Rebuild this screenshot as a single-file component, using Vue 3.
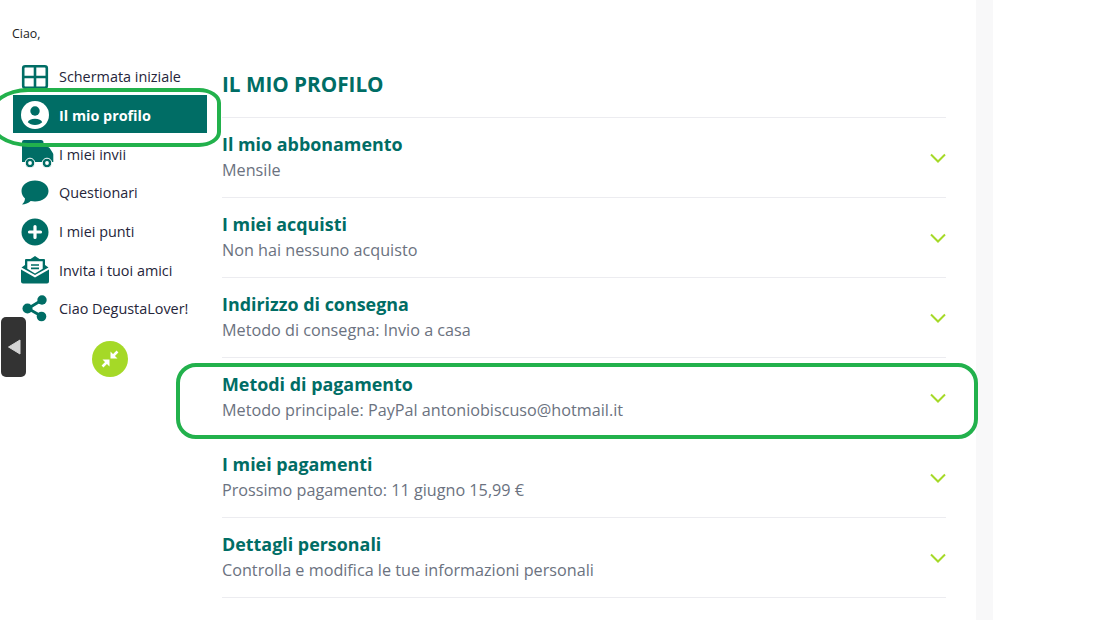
<template>
  <div class="page">
    <div class="shell">
      <aside class="sidebar">
        <p class="hello">Ciao,</p>
        <nav class="menu">
          <a v-for="item in menu" :key="item.label" class="menu-item" :class="{ active: item.active }">
            <span class="menu-icon">
              <svg viewBox="0 0 28 28" width="28" height="28" v-html="item.icon"></svg>
            </span>
            <span>{{ item.label }}</span>
          </a>
        </nav>
        <button class="collapse">
          <svg viewBox="0 0 36 36" width="36" height="36">
            <path d="M18.500 17.500V10.500L25.500 17.500Z M17.500 18.500V25.500L10.500 18.500Z" fill="#fff" />
            <path d="M21 15 25.500 10.500M15 21 10.500 25.500" stroke="#fff" stroke-width="2.600" />
          </svg>
        </button>
      </aside>

      <main class="content">
        <h1>IL MIO PROFILO</h1>
        <div class="rows">
          <div v-for="row in rows" :key="row.title" class="row">
            <div class="row-text">
              <h2>{{ row.title }}</h2>
              <p>{{ row.text }}</p>
            </div>
            <svg class="chevron" viewBox="0 0 16 10" width="16" height="10">
              <path d="M1 1.500 8 8.500 15 1.500" fill="none" stroke="#a5d927" stroke-width="2" />
            </svg>
          </div>
        </div>
      </main>
    </div>
    <div class="strip"></div>

    <div class="back-tab">
      <svg viewBox="0 0 14 16" width="14" height="16">
        <path d="M13 1V15L1.500 8Z" fill="#d4d4d4" stroke="#d4d4d4" stroke-linejoin="round" />
      </svg>
    </div>
    <div class="mark mark-menu"></div>
    <div class="mark mark-row"></div>
  </div>
</template>

<script setup>
const menu = [
  {
    label: 'Schermata iniziale',
    icon: '<rect x="2.200" y="3.200" width="23.600" height="21.600" rx="2" fill="#fff" stroke="#006d65" stroke-width="2.600"/><path d="M14 3v22M2 14h24" stroke="#006d65" stroke-width="2.600"/>'
  },
  {
    label: 'Il mio profilo',
    active: true,
    icon: '<circle cx="14" cy="14" r="14" fill="#fff"/><circle cx="14" cy="10" r="4.700" fill="#006d65"/><path d="M6.800 21.300c.6-2.300 3.500-3.500 7.200-3.500s6.600 1.200 7.200 3.500c-1.600 1.500-4.200 2.700-7.200 2.700s-5.600-1.200-7.200-2.700Z" fill="#006d65"/>'
  },
  {
    label: 'I miei invii',
    icon: '<path fill="#006d65" d="M3 0h17a2.500 2.500 0 0 1 2.500 2.500V7h4c1 0 1.700.4 2.300 1.200l3 4.800c.3.500.5 1 .5 1.600V22H1V2a2 2 0 0 1 2-2Z"/><circle cx="9" cy="23" r="4.800" fill="#006d65" stroke="#fff" stroke-width="1"/><circle cx="9" cy="23" r="1.900" fill="#fff"/><circle cx="26" cy="23" r="4.800" fill="#006d65" stroke="#fff" stroke-width="1"/><circle cx="26" cy="23" r="1.900" fill="#fff"/>'
  },
  {
    label: 'Questionari',
    icon: '<path fill="#006d65" d="M14 1.500c7.500 0 13.500 4.300 13.500 10.500S21.500 22.500 14 22.500c-1.500 0-3-.2-4.300-.5C7.500 24 4 25.500 1 25.500c1.500-1.500 3-3.500 3-6C2 17.500.500 15 .500 12 .500 5.800 6.500 1.500 14 1.500Z"/>'
  },
  {
    label: 'I miei punti',
    icon: '<circle cx="14" cy="14" r="13.500" fill="#006d65"/><path d="M14 8.500v11M8.500 14h11" stroke="#fff" stroke-width="3.200" stroke-linecap="round"/>'
  },
  {
    label: 'Invita i tuoi amici',
    icon: '<path fill="#006d65" d="M14 0l4.500 3H23a1 1 0 0 1 1 1v5l3.500 2.500L14 19 .500 11.500 4 9V4a1 1 0 0 1 1-1h4.500Z"/><path fill="#fff" d="M6.300 5.300h15.400v7.500L14 17.500l-7.700-4.700Z"/><path d="M10 9h8M10 12.300h8" stroke="#006d65" stroke-width="1.700"/><path fill="#006d65" d="M0 13.500l14 8 14-8V25.500a2 2 0 0 1-2 2H2a2 2 0 0 1-2-2Z"/>'
  },
  {
    label: 'Ciao DegustaLover!',
    icon: '<path d="M21 5 7 13.500 21 21.500" fill="none" stroke="#006d65" stroke-width="2.800"/><circle cx="21" cy="5" r="4.700" fill="#006d65"/><circle cx="6.500" cy="13.500" r="5" fill="#006d65"/><circle cx="20.500" cy="21.500" r="4.800" fill="#006d65"/>'
  }
]

const rows = [
  { title: 'Il mio abbonamento', text: 'Mensile' },
  { title: 'I miei acquisti', text: 'Non hai nessuno acquisto' },
  { title: 'Indirizzo di consegna', text: 'Metodo di consegna: Invio a casa' },
  { title: 'Metodi di pagamento', text: 'Metodo principale: PayPal antoniobiscuso@hotmail.it' },
  { title: 'I miei pagamenti', text: 'Prossimo pagamento: 11 giugno 15,99 €' },
  { title: 'Dettagli personali', text: 'Controlla e modifica le tue informazioni personali' }
]
</script>

<style>
html, body {
  margin: 0;
  background: #fff;
}
</style>

<style scoped>
.page {
  position: relative;
  display: flex;
  height: 620px;
  overflow: hidden;
  font-family: "Open Sans", "Liberation Sans", sans-serif;
  background: #fff;
}

.shell {
  display: flex;
  width: 976px;
  flex-shrink: 0;
}

.strip {
  width: 17px;
  background: #f8f8f9;
}

.sidebar {
  width: 222px;
  flex-shrink: 0;
  padding: 25px 0 0 13px;
  box-sizing: border-box;
  display: flex;
  flex-direction: column;
}

.hello {
  margin: 0 0 14.800px -1px;
  font-size: 12.400px;
  line-height: 17px;
  color: #222;
}

.menu {
  width: 194px;
  display: flex;
  flex-direction: column;
  gap: 0.7px;
}

.menu-item {
  display: flex;
  align-items: center;
  gap: 10px;
  height: 38px;
  box-sizing: border-box;
  padding: 2px 0 0 8px;
  font-size: 14.400px;
  color: #25253a;
}

.menu-item.active {
  background: #006d65;
  color: #fff;
  font-weight: 700;
}

.menu-icon {
  display: flex;
  width: 28px;
  height: 28px;
}

.menu-icon svg {
  overflow: visible;
}

.collapse {
  align-self: flex-start;
  margin: 14.200px 0 0 79px;
  width: 36px;
  height: 36px;
  padding: 0;
  border: 0;
  border-radius: 50%;
  background: #a5d927;
}

.collapse svg {
  display: block;
}

.content {
  flex: 1;
  padding: 69px 30px 0 0;
}

h1 {
  margin: 0 0 18px;
  font-size: 20.700px;
  line-height: 30px;
  font-weight: 700;
  color: #006d65;
}

.rows {
  border-top: 1px solid #ececf0;
}

.row {
  display: flex;
  align-items: center;
  justify-content: space-between;
  height: 79px;
  border-bottom: 1px solid #ececf0;
}

.row-text {
  margin-bottom: 2px;
}

h2 {
  margin: 0;
  font-size: 17.900px;
  line-height: 27px;
  font-weight: 700;
  color: #006d65;
}

.row p {
  margin: 0;
  font-size: 16.200px;
  line-height: 24px;
  color: #6b7280;
}

.back-tab {
  position: absolute;
  left: 1px;
  top: 317px;
  width: 25px;
  height: 60px;
  border-radius: 5px;
  background: #333;
  display: flex;
  align-items: center;
  justify-content: center;
}

.mark {
  position: absolute;
  box-sizing: border-box;
  border: 4px solid #22b14c;
}

.mark-menu {
  left: -12px;
  top: 88px;
  width: 233px;
  height: 59px;
  border-radius: 40px 22px 22px 40px / 28px 15px 15px 28px;
}

.mark-row {
  left: 176px;
  top: 363px;
  width: 802px;
  height: 76px;
  border-radius: 20px;
}
</style>
